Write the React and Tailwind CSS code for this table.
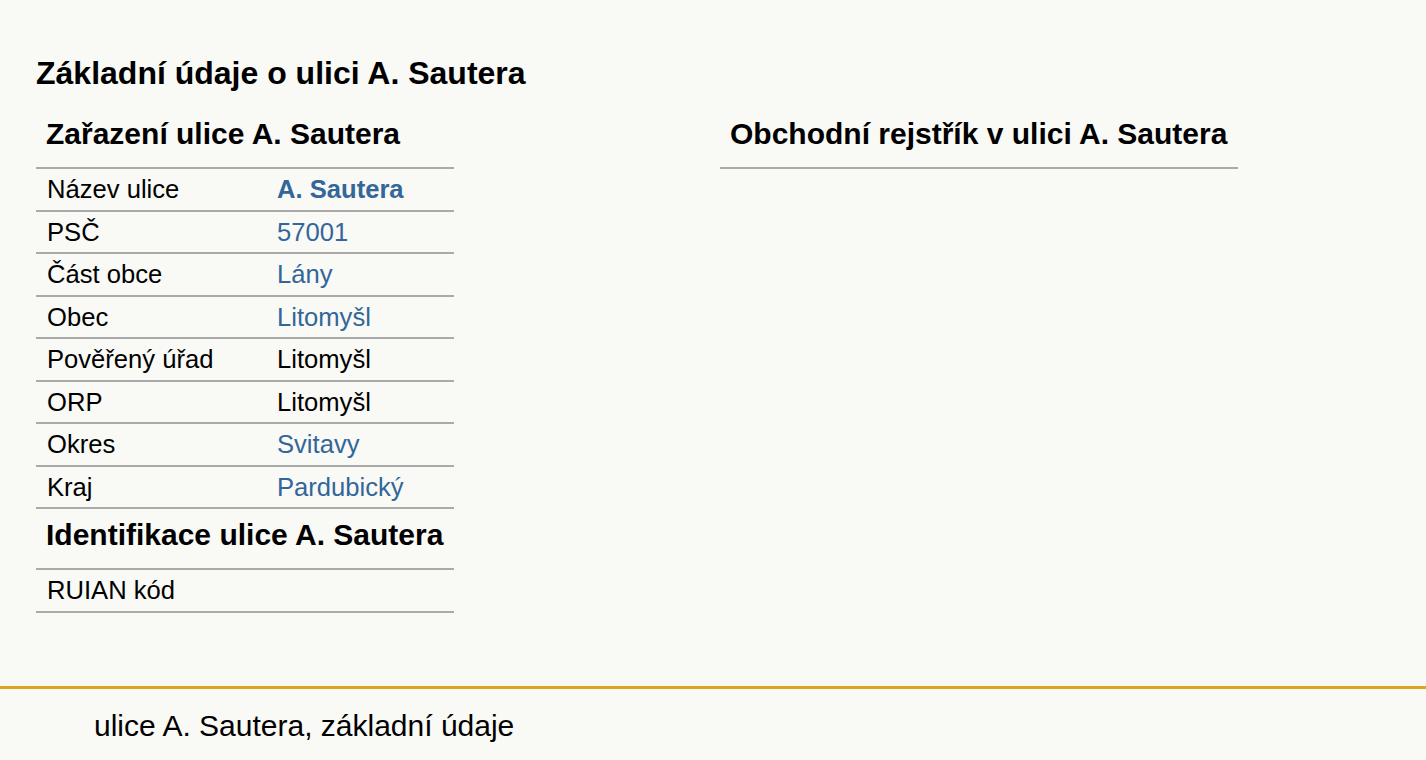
const rows = [
  { label: 'Název ulice', value: 'A. Sautera', link: true, bold: true },
  { label: 'PSČ', value: '57001', link: true },
  { label: 'Část obce', value: 'Lány', link: true },
  { label: 'Obec', value: 'Litomyšl', link: true },
  { label: 'Pověřený úřad', value: 'Litomyšl' },
  { label: 'ORP', value: 'Litomyšl' },
  { label: 'Okres', value: 'Svitavy', link: true },
  { label: 'Kraj', value: 'Pardubický', link: true },
];

function Row({ label, value, link, bold }) {
  return (
    <div className="flex h-[42.5px] items-center border-b-2 border-[#aaaaaa] text-[25.6px]">
      <div className="w-[241px] pl-[11px]">{label}</div>
      <div className={(link ? 'text-[#336699] ' : '') + (bold ? 'font-bold' : '')}>{value}</div>
    </div>
  );
}

export default function App() {
  return (
    <div className="min-h-[760px] bg-[#f9f9f6] text-black" style={{ fontFamily: "'Liberation Sans', Arial, sans-serif" }}>
      <div className="px-[36px] pt-[55px] pb-[73px]">
        <h1 className="text-[32px] font-bold leading-[36px]">Základní údaje o ulici A. Sautera</h1>
        <div className="mt-[24px] flex">
          <div className="w-[418px]">
            <h2 className="border-b-2 border-[#aaaaaa] pl-[10px] pb-[14px] text-[30px] font-bold leading-[38px]">
              Zařazení ulice A. Sautera
            </h2>
            {rows.map((r) => (
              <Row key={r.label} {...r} />
            ))}
            <h2 className="border-b-2 border-[#aaaaaa] pl-[10px] pt-[7px] pb-[14px] text-[30px] font-bold leading-[38px]">
              Identifikace ulice A. Sautera
            </h2>
            <Row label="RUIAN kód" value="" />
          </div>
          <div className="ml-[266px] w-[518px]">
            <h2 className="border-b-2 border-[#aaaaaa] pl-[10px] pb-[14px] text-[30px] font-bold leading-[38px]">
              Obchodní rejstřík v ulici A. Sautera
            </h2>
          </div>
        </div>
      </div>
      <footer className="border-t-[3px] border-[#daa520] px-[94px] pt-[14px] pb-[24px] text-[30px]">
        ulice A. Sautera, základní údaje
      </footer>
    </div>
  );
}
